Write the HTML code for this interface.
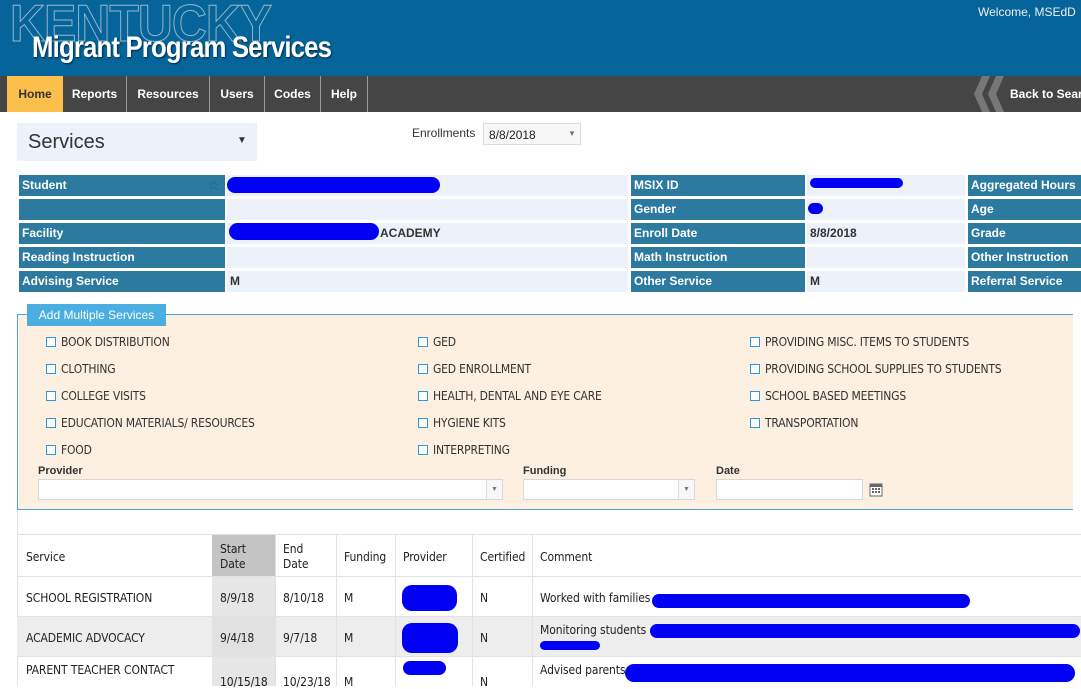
<!DOCTYPE html>
<html><head><style>
*{margin:0;padding:0;box-sizing:border-box}
body{width:1081px;height:686px;overflow:hidden;background:#fff;font-family:"Liberation Sans",Arial,sans-serif;position:relative}
.a{position:absolute}
.nav a{position:absolute;top:76px;height:36px;line-height:37px;color:#fff;font-weight:bold;font-size:12px;text-align:center;border-right:1px solid #999}
.lb{position:absolute;background:#2c7aa0;color:#fff;font-weight:bold;font-size:12px;height:21px;line-height:21px;padding-left:3px;white-space:nowrap;overflow:hidden}
.vl{position:absolute;background:#edf1f9;color:#333;font-weight:bold;font-size:12px;height:21px;line-height:21px;padding-left:3px}
.cb{position:absolute;font-size:12px;color:#333;font-family:"DejaVu Sans Condensed","Liberation Sans",sans-serif;letter-spacing:-0.2px;white-space:nowrap}
.cb:before{content:"";display:inline-block;width:8px;height:8px;border:1px solid #2a9ad8;background:#fff;margin-right:5px;vertical-align:-1px}
.inp{position:absolute;background:#fff;border:1px solid #d8d8d8;height:21px}
.th,.td{position:absolute;font-size:12px;color:#222;font-family:"DejaVu Sans Condensed","Liberation Sans",sans-serif;letter-spacing:-0.1px;white-space:nowrap}
.blob{position:absolute;background:#0000f5;border-radius:10px}
.vline{position:absolute;width:1px;background:#e2e2e2;top:535px;height:151px}
</style></head><body>
<div class="a" style="left:0;top:0;width:1081px;height:76px;background:#05659a"></div>
<div class="a" style="left:10px;top:-6px;font-size:52px;font-weight:bold;color:transparent;-webkit-text-stroke:1px #9ab8cc;letter-spacing:-1px;transform:scaleX(0.93);transform-origin:0 0">KENTUCKY</div>
<div class="a" style="left:32px;top:31px;font-size:30px;font-weight:bold;color:#fff;letter-spacing:-1px;text-shadow:1px 1px 2px #024;transform:scaleX(0.86);transform-origin:0 0;white-space:nowrap">Migrant Program Services</div>
<div class="a" style="left:978px;top:5px;font-size:12px;color:#eee;white-space:nowrap">Welcome, MSEdD</div>
<div class="a" style="left:0;top:76px;width:1081px;height:36px;background:#454545"></div>
<div class="nav">
<a style="left:7px;width:56px;background:#fdbf4b;color:#333;border-right:none">Home</a>
<a style="left:63px;width:64px">Reports</a>
<a style="left:127px;width:83px">Resources</a>
<a style="left:210px;width:55px">Users</a>
<a style="left:265px;width:56px">Codes</a>
<a style="left:321px;width:47px">Help</a>
</div>
<svg class="a" style="left:972px;top:76px" width="34" height="36"><polygon points="10,0 18,0 10,18 18,36 10,36 2,18" fill="#777"/><polygon points="24,0 32,0 24,18 32,36 24,36 16,18" fill="#777"/></svg>
<div class="a" style="left:1010px;top:87px;font-size:12px;font-weight:bold;color:#fff;white-space:nowrap">Back to Search</div>

<div class="a" style="left:17px;top:123px;width:240px;height:38px;background:#edf1f9"></div>
<div class="a" style="left:28px;top:131px;font-size:20px;color:#333">Services</div>
<div class="a" style="left:237px;top:135px;font-size:10px;color:#333">▼</div>
<div class="a" style="left:412px;top:126px;font-size:12px;color:#333">Enrollments</div>
<div class="a" style="left:483px;top:123px;width:98px;height:22px;background:#f7f7f7;border:1px solid #ddd;font-size:12px;padding:4px 0 0 5px;color:#222">8/8/2018</div>
<div class="a" style="left:568px;top:129px;font-size:8px;color:#777">▼</div>

<div class="lb" style="left:19px;top:175px;width:206px">Student<span style="position:absolute;right:5px;top:0;color:#1c5d85;font-weight:normal;font-size:14px">☆</span></div>
<div class="lb" style="left:19px;top:199px;width:206px"></div>
<div class="lb" style="left:19px;top:223px;width:206px">Facility</div>
<div class="lb" style="left:19px;top:247px;width:206px">Reading Instruction</div>
<div class="lb" style="left:19px;top:271px;width:206px">Advising Service</div>
<div class="vl" style="left:227px;top:175px;width:401px"></div>
<div class="vl" style="left:227px;top:199px;width:401px"></div>
<div class="vl" style="left:227px;top:223px;width:401px"><span style="position:absolute;left:153px">ACADEMY</span></div>
<div class="vl" style="left:227px;top:247px;width:401px"></div>
<div class="vl" style="left:227px;top:271px;width:401px">M</div>
<div class="lb" style="left:631px;top:175px;width:174px">MSIX ID</div>
<div class="lb" style="left:631px;top:199px;width:174px">Gender</div>
<div class="lb" style="left:631px;top:223px;width:174px">Enroll Date</div>
<div class="lb" style="left:631px;top:247px;width:174px">Math Instruction</div>
<div class="lb" style="left:631px;top:271px;width:174px">Other Service</div>
<div class="vl" style="left:807px;top:175px;width:158px"></div>
<div class="vl" style="left:807px;top:199px;width:158px"></div>
<div class="vl" style="left:807px;top:223px;width:158px">8/8/2018</div>
<div class="vl" style="left:807px;top:247px;width:158px"></div>
<div class="vl" style="left:807px;top:271px;width:158px">M</div>
<div class="lb" style="left:968px;top:175px;width:113px">Aggregated Hours</div>
<div class="lb" style="left:968px;top:199px;width:113px">Age</div>
<div class="lb" style="left:968px;top:223px;width:113px">Grade</div>
<div class="lb" style="left:968px;top:247px;width:113px">Other Instruction</div>
<div class="lb" style="left:968px;top:271px;width:113px">Referral Service</div>
<div class="blob" style="left:227px;top:177px;width:213px;height:16px"></div>
<div class="blob" style="left:229px;top:223px;width:150px;height:17px"></div>
<div class="blob" style="left:810px;top:178px;width:93px;height:10px"></div>
<div class="blob" style="left:808px;top:203px;width:15px;height:11px"></div>

<div class="a" style="left:17px;top:314px;width:1056px;height:196px;background:#fdf0e1;border:1px solid #4aa9d9;border-right:none"></div>
<div class="a" style="left:27px;top:304px;width:139px;height:22px;background:#4aaee0;color:#fff;font-size:12px;line-height:22px;text-align:center">Add Multiple Services</div>
<div class="cb" style="left:46px;top:335px">BOOK DISTRIBUTION</div>
<div class="cb" style="left:46px;top:362px">CLOTHING</div>
<div class="cb" style="left:46px;top:389px">COLLEGE VISITS</div>
<div class="cb" style="left:46px;top:416px">EDUCATION MATERIALS/ RESOURCES</div>
<div class="cb" style="left:46px;top:443px">FOOD</div>
<div class="cb" style="left:418px;top:335px">GED</div>
<div class="cb" style="left:418px;top:362px">GED ENROLLMENT</div>
<div class="cb" style="left:418px;top:389px">HEALTH, DENTAL AND EYE CARE</div>
<div class="cb" style="left:418px;top:416px">HYGIENE KITS</div>
<div class="cb" style="left:418px;top:443px">INTERPRETING</div>
<div class="cb" style="left:750px;top:335px">PROVIDING MISC. ITEMS TO STUDENTS</div>
<div class="cb" style="left:750px;top:362px">PROVIDING SCHOOL SUPPLIES TO STUDENTS</div>
<div class="cb" style="left:750px;top:389px">SCHOOL BASED MEETINGS</div>
<div class="cb" style="left:750px;top:416px">TRANSPORTATION</div>
<div class="a" style="left:38px;top:465px;font-size:11px;font-weight:bold;color:#333">Provider</div>
<div class="a" style="left:523px;top:465px;font-size:11px;font-weight:bold;color:#333">Funding</div>
<div class="a" style="left:716px;top:465px;font-size:11px;font-weight:bold;color:#333">Date</div>
<div class="inp" style="left:38px;top:479px;width:465px"><div style="position:absolute;right:0;top:0;width:16px;height:19px;border-left:1px solid #ddd;background:#f7f7f7;font-size:7px;color:#777;text-align:center;line-height:19px">▼</div></div>
<div class="inp" style="left:523px;top:479px;width:172px"><div style="position:absolute;right:0;top:0;width:16px;height:19px;border-left:1px solid #ddd;background:#f7f7f7;font-size:7px;color:#777;text-align:center;line-height:19px">▼</div></div>
<div class="inp" style="left:716px;top:479px;width:147px"></div>
<svg class="a" style="left:869px;top:482px" width="15" height="15"><rect x="1" y="2" width="12" height="12" fill="#fff" stroke="#666"/><rect x="1" y="2" width="12" height="3" fill="#666"/><g fill="#666"><rect x="3" y="6" width="2" height="2"/><rect x="6" y="6" width="2" height="2"/><rect x="9" y="6" width="2" height="2"/><rect x="3" y="9" width="2" height="2"/><rect x="6" y="9" width="2" height="2"/><rect x="9" y="9" width="2" height="2"/></g></svg>

<div class="a" style="left:17px;top:510px;width:1px;height:176px;background:#e2e2e2"></div>
<div class="a" style="left:17px;top:534px;width:1064px;height:1px;background:#e2e2e2"></div>
<div class="a" style="left:212px;top:535px;width:63px;height:42px;background:#c4c4c4"></div>
<div class="a" style="left:212px;top:577px;width:63px;height:109px;background:#e6e6e6"></div>
<div class="a" style="left:17px;top:617px;width:1064px;height:40px;background:#ededed"></div>
<div class="a" style="left:212px;top:617px;width:63px;height:40px;background:#e1e1e1"></div>
<div class="a" style="left:17px;top:576px;width:1064px;height:1px;background:#e2e2e2"></div>
<div class="a" style="left:17px;top:616px;width:1064px;height:1px;background:#e2e2e2"></div>
<div class="a" style="left:17px;top:656px;width:1064px;height:1px;background:#e2e2e2"></div>
<div class="vline" style="left:275px"></div><div class="vline" style="left:336px"></div><div class="vline" style="left:395px"></div><div class="vline" style="left:472px"></div><div class="vline" style="left:532px"></div>
<div class="th" style="left:26px;top:550px">Service</div>
<div class="th" style="left:220px;top:542px;line-height:15px">Start<br>Date</div>
<div class="th" style="left:283px;top:542px;line-height:15px">End<br>Date</div>
<div class="th" style="left:344px;top:550px">Funding</div>
<div class="th" style="left:403px;top:550px">Provider</div>
<div class="th" style="left:480px;top:550px">Certified</div>
<div class="th" style="left:540px;top:550px">Comment</div>
<div class="td" style="left:26px;top:591px">SCHOOL REGISTRATION</div><div class="td" style="left:220px;top:591px">8/9/18</div><div class="td" style="left:283px;top:591px">8/10/18</div><div class="td" style="left:344px;top:591px">M</div><div class="td" style="left:480px;top:591px">N</div><div class="td" style="left:540px;top:591px">Worked with families</div>
<div class="td" style="left:26px;top:631px">ACADEMIC ADVOCACY</div><div class="td" style="left:220px;top:631px">9/4/18</div><div class="td" style="left:283px;top:631px">9/7/18</div><div class="td" style="left:344px;top:631px">M</div><div class="td" style="left:480px;top:631px">N</div><div class="td" style="left:540px;top:623px">Monitoring students</div>
<div class="td" style="left:26px;top:663px">PARENT TEACHER CONTACT</div><div class="td" style="left:220px;top:675px">10/15/18</div><div class="td" style="left:283px;top:675px">10/23/18</div><div class="td" style="left:344px;top:675px">M</div><div class="td" style="left:480px;top:675px">N</div><div class="td" style="left:540px;top:663px">Advised parents</div>
<div class="blob" style="left:402px;top:585px;width:55px;height:26px"></div>
<div class="blob" style="left:402px;top:623px;width:56px;height:30px"></div>
<div class="blob" style="left:403px;top:661px;width:43px;height:14px"></div>
<div class="blob" style="left:652px;top:594px;width:318px;height:14px"></div>
<div class="blob" style="left:650px;top:624px;width:430px;height:14px"></div>
<div class="blob" style="left:540px;top:641px;width:60px;height:9px"></div>
<div class="blob" style="left:625px;top:664px;width:450px;height:18px"></div>
</body></html>
